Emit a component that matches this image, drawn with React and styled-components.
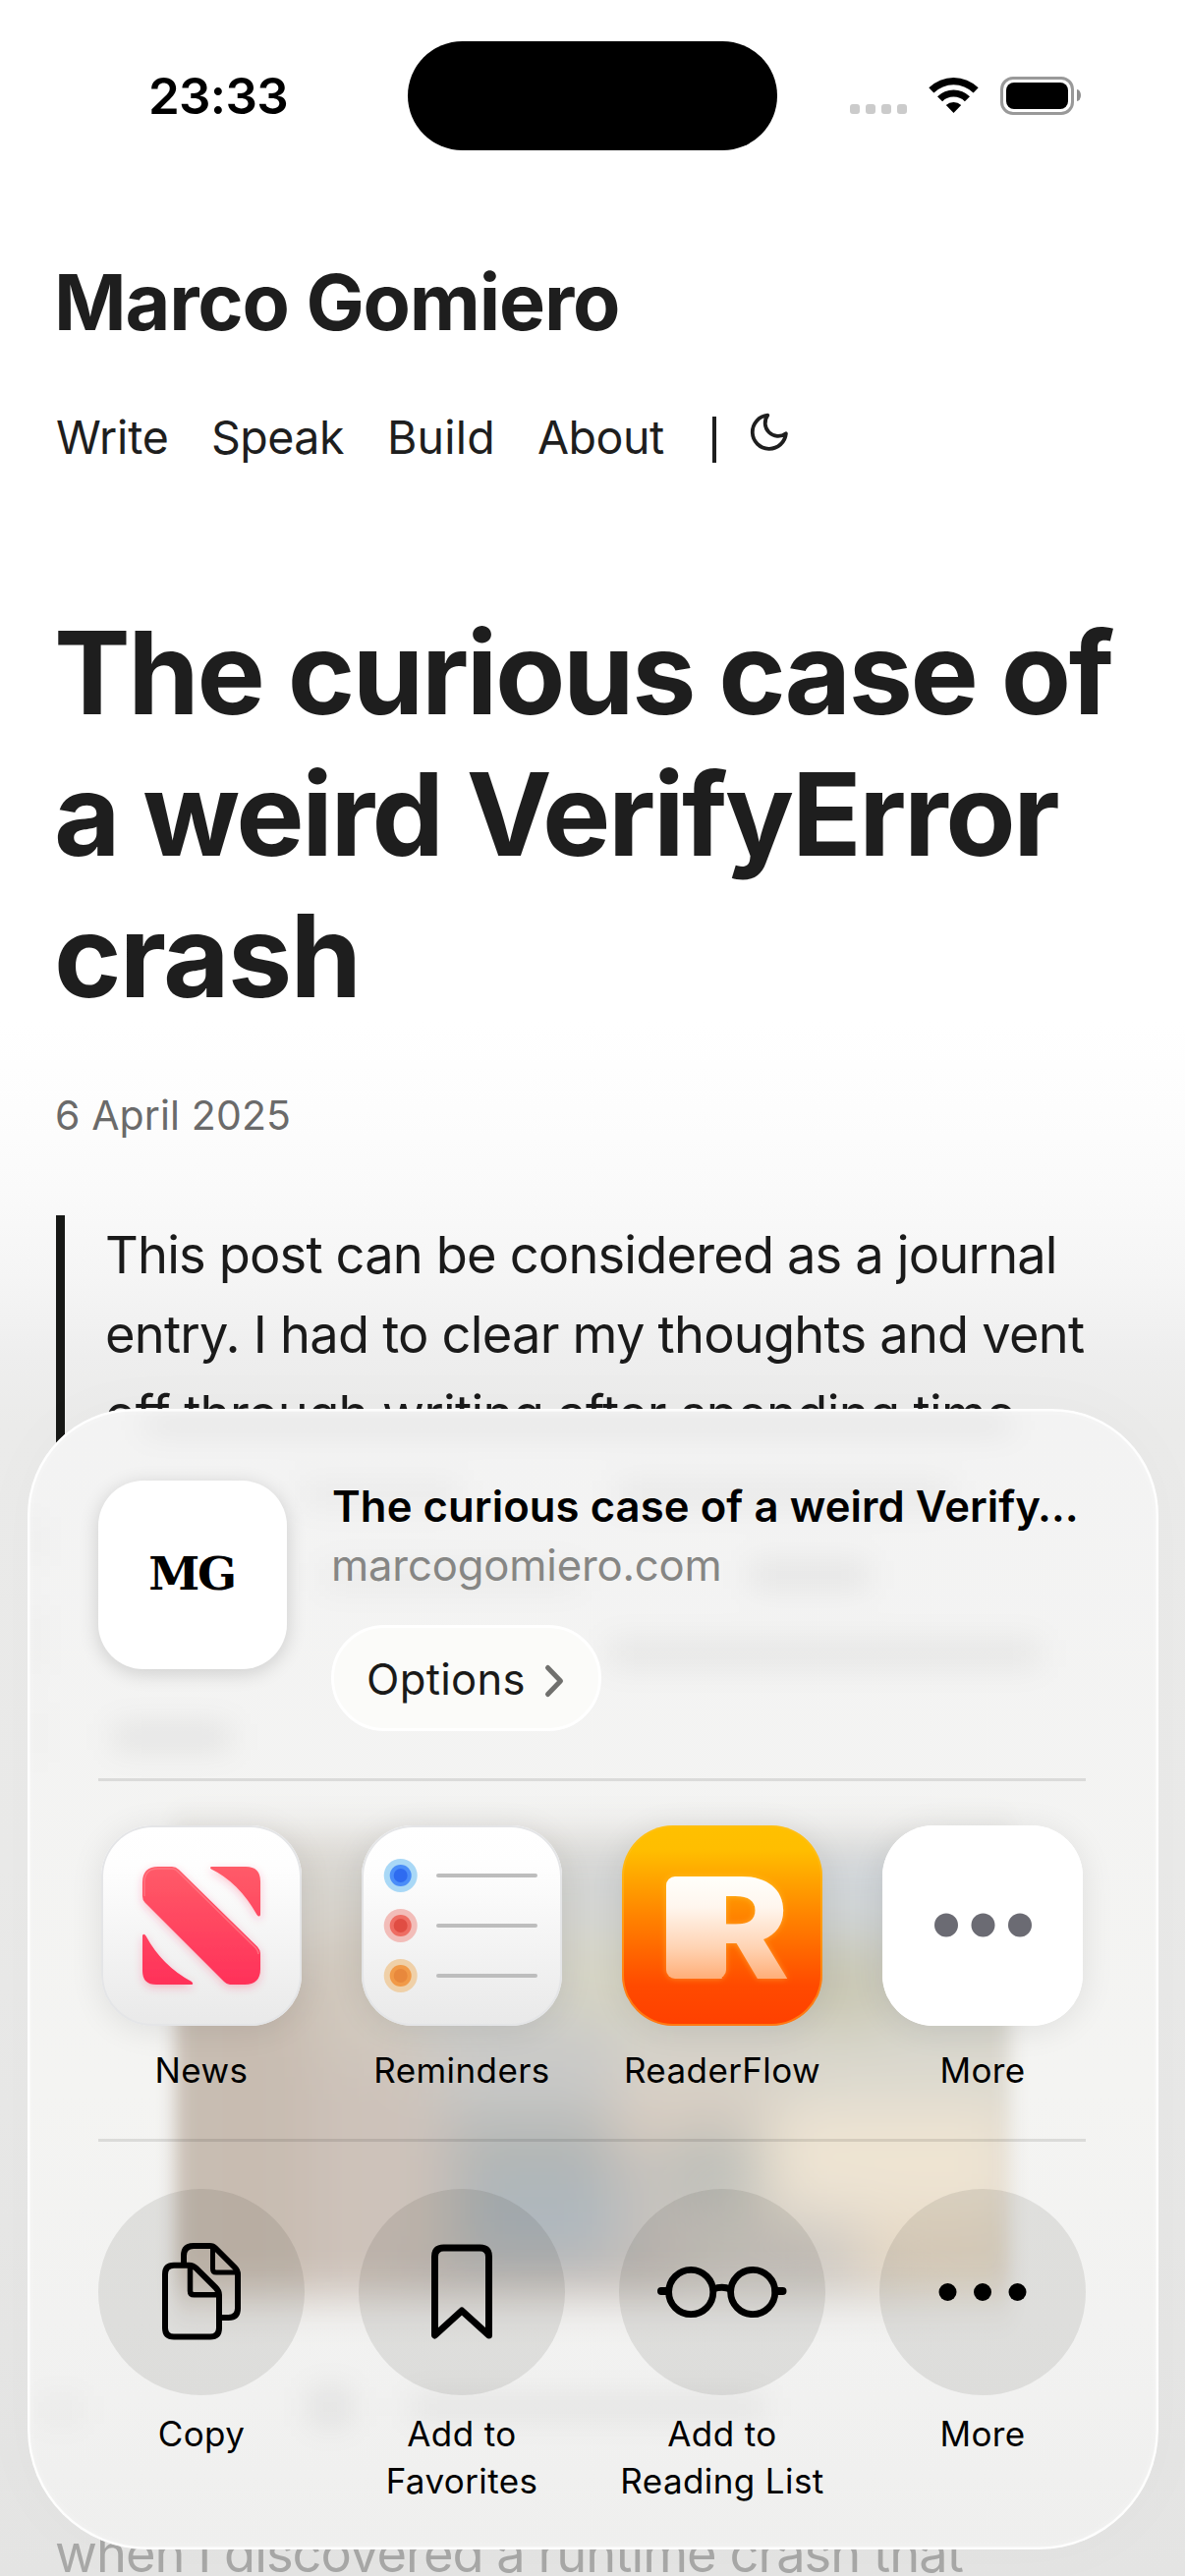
import React from 'react';
import styled, { createGlobalStyle } from 'styled-components';

const GlobalStyle = createGlobalStyle`
  * { box-sizing: border-box; }
  body { margin: 0; background: #fff; }
`;

const Screen = styled.div`
  position: relative;
  width: 1206px;
  height: 2622px;
  overflow: hidden;
  display: flex;
  flex-direction: column;
  font-family: Inter, "Noto Sans", sans-serif;
  color: #1e1e1e;
  background: linear-gradient(
    180deg,
    #fff 0, #fff 1040px, #fdfdfd 1130px, #fafafa 1210px, #f5f5f5 1300px,
    #eeeeee 1380px, #ebebea 1450px, #eaeae9 1900px, #e4e4e3 2622px
  );
`;

/* ---------- status bar ---------- */

const StatusBar = styled.header`
  display: grid;
  grid-template-columns: 415px 376px 1fr;
  align-items: center;
  margin-top: 41px;
  height: 112px;
  color: #000;
`;

const Clock = styled.time`
  padding: 1px 0 0 151px;
  font-size: 51px;
  font-weight: 600;
  line-height: 60px;
  letter-spacing: -0.7px;
`;

const Island = styled.div`
  height: 111px;
  border-radius: 56px;
  background: #000;
`;

const StatusIcons = styled.div`
  display: flex;
  align-items: center;
  padding-left: 74px;
  gap: 22px;
`;

const Signal = styled.div`
  display: flex;
  gap: 6px;
  margin-top: 28px;
`;

const SignalDot = styled.i`
  width: 10px;
  height: 10px;
  border-radius: 3px;
  background: #cbcbcb;
`;

const BatteryGroup = styled.div`
  display: flex;
  align-items: center;
  gap: 3px;
`;

const Battery = styled.div`
  width: 75px;
  height: 39px;
  padding: 3px;
  border: 3px solid #999;
  border-radius: 13px;
`;

const BatteryLevel = styled.div`
  height: 100%;
  border-radius: 8px;
  background: #000;
`;

const BatteryTip = styled.div`
  width: 4px;
  height: 12px;
  border-radius: 0 4px 4px 0 / 0 6px 6px 0;
  background: #8f8f8f;
`;

/* ---------- page ---------- */

const SiteName = styled.div`
  margin: 106px 0 0 55px;
  font-size: 79px;
  font-weight: 700;
  line-height: 96px;
  letter-spacing: -1.16px;
`;

const Nav = styled.nav`
  display: flex;
  align-items: center;
  margin: 62px 0 0 57px;
  height: 56px;
`;

const NavLink = styled.a`
  width: ${(p) => p.$w}px;
  white-space: nowrap;
  font-size: 46.5px;
  line-height: 56px;
  letter-spacing: ${(p) => p.$track}px;
`;

const NavRule = styled.span`
  width: 4px;
  height: 47px;
  margin-top: 5px;
  background: #1e1e1e;
`;

const Moon = styled.svg`
  width: 45.6px;
  height: 45.6px;
  margin: -11px 0 0 30.6px;
`;

const Title = styled.h1`
  margin: 140px 0 0 55px;
  font-size: 116.5px;
  font-weight: 700;
  line-height: 144px;
`;

const Line = styled.span`
  display: block;
  white-space: nowrap;
  letter-spacing: ${(p) => p.$track}px;
`;

const PostDate = styled.div`
  margin: 65px 0 0 56px;
  font-size: 41px;
  line-height: 50px;
  letter-spacing: 0.12px;
  color: #6a6a6a;
`;

const Quote = styled.blockquote`
  margin: 77px 0 0 57px;
  height: 486px;
  padding-left: 41px;
  border-left: 9px solid #171816;
  font-size: 52.4px;
  line-height: 81px;
  color: #1a1a1a;
`;

const BodyText = styled.p`
  margin: auto 0 0 56px;
  font-size: 52.4px;
  line-height: 46px;
  letter-spacing: -0.97px;
  white-space: nowrap;
  color: #a8a8a7;
`;

/* ---------- share sheet ---------- */

const Sheet = styled.section`
  position: absolute;
  left: 28px;
  top: 1434px;
  width: 1151px;
  height: 1161px;
  padding: 70px 0 0 72px;
  overflow: hidden;
  border-radius: 108px 108px 122px 122px;
  background: linear-gradient(180deg, #f3f3f3, #f4f4f2 60%, #f2f2f1 80%, #efefee);
  box-shadow: 0 0 70px rgba(0, 0, 0, 0.025);
`;

const Rim = styled.div`
  position: absolute;
  inset: 0;
  border-radius: inherit;
  box-shadow: inset 0 0 0 2.5px rgba(255, 255, 255, 0.85), inset 0 0 12px rgba(255, 255, 255, 0.5);
`;

const Backdrop = styled.svg`
  position: absolute;
  inset: 0;
  width: 1151px;
  height: 1161px;
`;

const SheetBody = styled.div`
  position: relative;
  display: flex;
  flex-direction: column;
  width: 1005px;
  color: #000;
`;

const LinkHeader = styled.div`
  display: flex;
  height: 258px;
`;

const SiteIcon = styled.div`
  display: flex;
  align-items: center;
  justify-content: center;
  flex: none;
  width: 192px;
  height: 192px;
  margin-top: 3px;
  border-radius: 46px;
  background: #fff;
  box-shadow: 0 4px 20px rgba(0, 0, 0, 0.16);
  font-family: "DejaVu Serif", serif;
  font-size: 47px;
  font-weight: 700;
  line-height: 60px;
  letter-spacing: -2.4px;
  padding: 0 2px 3px 0;
`;

const LinkInfo = styled.div`
  display: flex;
  flex-direction: column;
  align-items: flex-start;
  padding-left: 46px;
`;

const LinkTitle = styled.div`
  font-size: 43.6px;
  font-weight: 600;
  line-height: 60px;
  letter-spacing: 0.09px;
  white-space: nowrap;
`;

const LinkHost = styled.div`
  margin-left: -1px;
  font-size: 43.6px;
  line-height: 60px;
  letter-spacing: -0.15px;
  color: #868684;
`;

const OptionsButton = styled.button`
  display: flex;
  align-items: center;
  width: 275px;
  height: 108px;
  margin: 30px 0 0 -1px;
  padding: 2px 0 0 33px;
  border: 3px solid #fff;
  border-radius: 54px;
  background: #fbfbf9;
  font-family: inherit;
  font-size: 43.6px;
  letter-spacing: 0.3px;
  color: #1a1a19;
`;

const Chevron = styled.svg`
  width: 22px;
  height: 36px;
  margin: 3px 0 0 18px;
`;

const Divider = styled.div`
  height: 3px;
  margin-top: ${(p) => p.$top}px;
  background: rgba(0, 0, 0, 0.1);
`;

const Grid = styled.div`
  display: grid;
  grid-template-columns: repeat(4, 210px);
  column-gap: 55px;
  margin-top: ${(p) => p.$top}px;
`;

const Item = styled.div`
  display: flex;
  flex-direction: column;
  align-items: center;
`;

const AppTile = styled.div`
  width: 204px;
  height: 204px;
  border-radius: 52px;
  background: ${(p) => p.$bg};
  box-shadow: inset 0 0 0 2px ${(p) => p.$rim}, 0 4px 34px rgba(0, 0, 0, 0.09);
`;

const ActionDisc = styled.div`
  width: 210px;
  height: 210px;
  border-radius: 50%;
  background: rgba(30, 30, 20, 0.095);
`;

const Art = styled.svg`
  display: block;
  width: 100%;
  height: 100%;
`;

const Label = styled.div`
  margin-top: ${(p) => p.$gap}px;
  font-size: 35px;
  line-height: 48px;
  letter-spacing: 0.4px;
  text-align: center;
  white-space: pre;
`;

const WifiIcon = () => (
  <svg width="51" height="38" viewBox="0 0 51 38">
    <path d="M0.3 11.3 A36 36 0 0 1 50.7 11.3 L45.6 16.4 A29 29 0 0 0 5.4 16.4 Z" />
    <path d="M9 20.2 A23.5 23.5 0 0 1 42 20.2 L36.9 25.2 A16.3 16.3 0 0 0 14.1 25.2 Z" />
    <path d="M17.8 29 A11.3 11.3 0 0 1 33.2 29 L25.5 37 Z" />
  </svg>
);

const NewsArt = () => (
  <Art viewBox="0 0 204 204">
    <defs>
      <linearGradient id="news" gradientUnits="userSpaceOnUse" x1="0" y1="42" x2="0" y2="162">
        <stop offset="0" stopColor="#ff5b68" />
        <stop offset="1" stopColor="#ff3159" />
      </linearGradient>
      <filter id="newsGlow" x="-20%" y="-20%" width="140%" height="140%">
        <feDropShadow dx="0" dy="3" stdDeviation="4" floodColor="#ff3159" floodOpacity=".28" />
      </filter>
    </defs>
    <g fill="url(#news)" filter="url(#newsGlow)">
      <path d="M42 58Q42 42 58 42H72Q76 42 79 45L159 123.5Q162 127 162 130V146Q162 162 146 162H131Q128 162 125 159L44.5 78.5Q42 76 42 72Z" />
      <path d="M112 42H147Q162 42 162 57V91Q161 94 158.500 91Q140 58 112 44.500Q110 43 112 42Z" />
      <path d="M42 112Q43.500 109.500 45.500 112.500Q62 143 92 159Q94.500 161.500 92 162H56Q42 162 42 148Z" />
    </g>
    <path d="M44 72V58Q44 44 58 44H72Q75 44 77.500 46.500L157.500 125Q160 128 160 131" fill="none" stroke="#ff7f8a" strokeWidth="1.500" opacity=".7" />
  </Art>
);

const reminderRows = [
  { y: 51, halo: '#a9d8f6', ring: '#4a8df8', core: '#2e6bf0' },
  { y: 102, halo: '#f2bdb9', ring: '#ee6d63', core: '#e04d43' },
  { y: 153, halo: '#efd0a8', ring: '#f19a48', core: '#e8883c' },
];

const RemindersArt = () => (
  <Art viewBox="0 0 204 204">
    {reminderRows.map((r) => (
      <g key={r.y}>
        <circle cx="39.7" cy={r.y} r="17" fill={r.halo} />
        <circle cx="39.7" cy={r.y} r="11" fill={r.ring} />
        <circle cx="39.7" cy={r.y} r="7" fill={r.core} />
        <rect x="76" y={r.y - 2} width="103" height="4" rx="2" fill="#bdbdbd" />
      </g>
    ))}
  </Art>
);

const ReaderArt = () => (
  <Art viewBox="0 0 204 204">
    <defs>
      <linearGradient id="reader" gradientUnits="userSpaceOnUse" x1="0" y1="52" x2="0" y2="156">
        <stop offset="0" stopColor="#fffffb" />
        <stop offset=".3" stopColor="#fff6ee" />
        <stop offset=".7" stopColor="#ffd3b3" />
        <stop offset="1" stopColor="#ffae78" />
      </linearGradient>
      <filter id="readerGlow" x="-20%" y="-20%" width="140%" height="140%">
        <feDropShadow dx="0" dy="0" stdDeviation="3" floodColor="#ffd84a" floodOpacity=".45" />
      </filter>
    </defs>
    <g fill="url(#reader)" filter="url(#readerGlow)">
      <text x="65" y="156" fontFamily="Inter, sans-serif" fontWeight="800" fontSize="143" textLength="106" lengthAdjust="spacingAndGlyphs">R</text>
      <rect x="45" y="52" width="61" height="104" rx="9" />
    </g>
  </Art>
);

const MoreArt = () => (
  <Art viewBox="0 0 204 204" fill="#6b6b73">
    <circle cx="65" cy="101.500" r="12" />
    <circle cx="102.500" cy="101.500" r="12" />
    <circle cx="140" cy="101.500" r="12" />
  </Art>
);

const CopyArt = () => (
  <Art viewBox="0 0 210 210" fill="none" stroke="#000" strokeWidth="6" strokeLinejoin="round">
    <path d="M87 75V68Q87 58 97 58H113.500Q117 58 119.500 60.500L139 80Q142 83 142 87V121.500Q142 131 132.500 131H125" />
    <path d="M116.500 59V81.500Q116.500 85 120 85H141" strokeWidth="5" />
    <path d="M68 87Q68 77.700 77 77.700H92.500Q96.500 77.700 99.500 80.700L119.500 100.500Q123 104 123 108V141.500Q123 150.500 114 150.500H77Q68 150.500 68 141.500Z" />
    <path d="M93.500 79V104Q93.500 107.800 97.500 107.800H122" strokeWidth="5.500" />
  </Art>
);

const BookmarkArt = () => (
  <Art viewBox="0 0 210 210" fill="none" stroke="#000" strokeWidth="7" strokeLinejoin="round">
    <path d="M77.500 149V69Q77.500 60 86.500 60H123.500Q132.500 60 132.500 69V149L105 124Z" />
  </Art>
);

const GlassesArt = () => (
  <Art viewBox="0 0 210 210" fill="none" stroke="#000" strokeWidth="6.800">
    <circle cx="73.200" cy="105" r="22.600" />
    <circle cx="136.200" cy="105" r="22.600" />
    <path d="M96 102Q104.700 98.500 113.500 102" />
    <path d="M43 104H50M159.500 104H166.500" strokeWidth="8" strokeLinecap="round" />
  </Art>
);

const EllipsisArt = () => (
  <Art viewBox="0 0 210 210">
    <circle cx="69.500" cy="105" r="9" />
    <circle cx="105" cy="105" r="9" />
    <circle cx="140.500" cy="105" r="9" />
  </Art>
);

const tileBg = 'linear-gradient(180deg, #fff 0%, #fefefe 20%, #e9e9e9 100%)';
const apps = [
  { name: 'News', art: NewsArt, bg: tileBg, rim: '#e4e5e7' },
  { name: 'Reminders', art: RemindersArt, bg: tileBg, rim: '#e4e5e7' },
  { name: 'ReaderFlow', art: ReaderArt, bg: 'linear-gradient(180deg, #ffc000 0%, #ffbe00 12%, #ff8400 45%, #ff4a00 80%, #ff4000 100%)', rim: 'rgba(255,190,40,.45)' },
  { name: 'More', art: MoreArt, bg: '#fff', rim: '#fff' },
];

const actions = [
  { id: 'copy', name: 'Copy', art: CopyArt },
  { id: 'favorites', name: 'Add to\nFavorites', art: BookmarkArt },
  { id: 'reading', name: 'Add to\nReading List', art: GlassesArt },
  { id: 'more', name: 'More', art: EllipsisArt },
];

const photoPatches = [
  [150, 430, 200, 180, '#d8d5cf'], [340, 430, 250, 140, '#d6d6d2'], [560, 430, 260, 130, '#d3d5d5'],
  [800, 430, 203, 150, '#d0d5d9'], [150, 560, 150, 400, '#c8bcb1'], [290, 520, 110, 200, '#d1c9be'],
  [390, 530, 160, 120, '#d3d3ce'], [540, 540, 120, 90, '#d6d4c2'], [650, 520, 130, 120, '#cfcfc9'],
  [770, 540, 120, 100, '#c8c6b0'], [880, 540, 123, 110, '#d2d2cb'], [290, 660, 150, 300, '#cdc2ba'],
  [420, 620, 190, 120, '#c9c9c7'], [600, 620, 200, 100, '#d5d2c9'], [790, 630, 213, 90, '#dad8ce'],
  [430, 720, 180, 180, '#b2b5b3'], [450, 780, 160, 90, '#aeb7bd'], [600, 690, 150, 70, '#dccfc2'],
  [600, 750, 100, 160, '#c8c3bd'], [650, 730, 120, 80, '#bdbfb9'], [750, 710, 253, 130, '#eee4d3'],
  [660, 820, 180, 100, '#cfcac4'], [850, 820, 153, 90, '#e6d9c6'], [380, 870, 300, 60, '#c6beb8'],
];

const smudges = [
  [120, 12, 880, 10, 0.11], [280, 72, 160, 30, 0.03], [600, 72, 340, 30, 0.04],
  [300, 156, 260, 30, 0.03], [735, 154, 120, 30, 0.055], [590, 234, 440, 30, 0.05],
  [88, 320, 118, 28, 0.065], [289, 996, 38, 40, 0.065], [390, 1004, 360, 24, 0.055],
  [14, 1004, 40, 30, 0.03], [2, 110, 5, 50, 0.09], [2, 200, 5, 70, 0.09], [2, 300, 5, 60, 0.08],
];

const BlurredPage = () => (
  <Backdrop viewBox="0 0 1151 1161">
    <defs>
      <filter id="soft" filterUnits="userSpaceOnUse" x="0" y="300" width="1151" height="861">
        <feGaussianBlur stdDeviation="30 30" />
      </filter>
      <filter id="smear" filterUnits="userSpaceOnUse" x="0" y="0" width="1151" height="1161">
        <feGaussianBlur stdDeviation="16 15" />
      </filter>
      <filter id="edge" filterUnits="userSpaceOnUse" x="0" y="300" width="1151" height="861">
        <feGaussianBlur stdDeviation="9 22" />
      </filter>
      <mask id="photo" maskUnits="userSpaceOnUse" x="0" y="300" width="1151" height="861">
        <g filter="url(#edge)">
          <rect x="150" y="440" width="850" height="464" fill="#fff" />
        </g>
      </mask>
    </defs>
    <g mask="url(#photo)">
      <rect x="100" y="380" width="950" height="600" fill="#cdc7c0" />
      <g filter="url(#soft)">
        <rect x="60" y="340" width="220" height="640" fill="#cbc3b9" />
        <rect x="900" y="340" width="220" height="640" fill="#dcd8cf" />
        {photoPatches.map(([x, y, w, h, c]) => (
          <rect key={`${x}-${y}`} x={x} y={y} width={w} height={h} fill={c} />
        ))}
      </g>
    </g>
    <g filter="url(#smear)">
      {smudges.map(([x, y, w, h, o]) => (
        <rect key={`${x}-${y}`} x={x} y={y} width={w} height={h} fillOpacity={o} />
      ))}
    </g>
  </Backdrop>
);

export default function App() {
  return (
    <Screen>
      <GlobalStyle />
      <StatusBar>
        <Clock>23:33</Clock>
        <Island />
        <StatusIcons>
          <Signal>
            <SignalDot /><SignalDot /><SignalDot /><SignalDot />
          </Signal>
          <WifiIcon />
          <BatteryGroup>
            <Battery><BatteryLevel /></Battery>
            <BatteryTip />
          </BatteryGroup>
        </StatusIcons>
      </StatusBar>

      <SiteName>Marco Gomiero</SiteName>
      <Nav>
        <NavLink $w={158} $track={-0.2}>Write</NavLink>
        <NavLink $w={179} $track={-0.5}>Speak</NavLink>
        <NavLink $w={153} $track={0.2}>Build</NavLink>
        <NavLink $w={178} $track={-0.48}>About</NavLink>
        <NavRule />
        <Moon viewBox="0 0 24 24" fill="none" stroke="#1e1e1e" strokeWidth="2" strokeLinecap="round" strokeLinejoin="round">
          <path d="M21 12.790A9 9 0 1 1 11.210 3 7 7 0 0 0 21 12.790z" />
        </Moon>
      </Nav>

      <Title>
        <Line $track={-2.4}>The curious case of</Line>
        <Line $track={-2.45}>a weird VerifyError</Line>
        <Line $track={-1.7}>crash</Line>
      </Title>
      <PostDate>6 April 2025</PostDate>
      <Quote>
        <Line $track={-0.83}>This post can be considered as a journal</Line>
        <Line $track={-0.77}>entry. I had to clear my thoughts and vent</Line>
        <Line $track={-0.68}>off through writing after spending time</Line>
      </Quote>
      <BodyText>when I discovered a runtime crash that</BodyText>

      <Sheet>
        <BlurredPage />
        <Rim />
        <SheetBody>
          <LinkHeader>
            <SiteIcon>MG</SiteIcon>
            <LinkInfo>
              <LinkTitle>The curious case of a weird Verify…</LinkTitle>
              <LinkHost>marcogomiero.com</LinkHost>
              <OptionsButton>
                Options
                <Chevron viewBox="0 0 22 36" fill="none" stroke="#70706e" strokeWidth="5" strokeLinecap="round" strokeLinejoin="round">
                  <path d="M4.500 4.500L17.500 18L4.500 31.500" />
                </Chevron>
              </OptionsButton>
            </LinkInfo>
          </LinkHeader>
          <Divider $top={48} />
          <Grid $top={45}>
            {apps.map(({ name, art: Icon, bg, rim }) => (
              <Item key={name}>
                <AppTile $bg={bg} $rim={rim}><Icon /></AppTile>
                <Label $gap={21}>{name}</Label>
              </Item>
            ))}
          </Grid>
          <Divider $top={46} />
          <Grid $top={48}>
            {actions.map(({ id, name, art: Icon }) => (
              <Item key={id}>
                <ActionDisc><Icon /></ActionDisc>
                <Label $gap={15}>{name}</Label>
              </Item>
            ))}
          </Grid>
        </SheetBody>
      </Sheet>
    </Screen>
  );
}
